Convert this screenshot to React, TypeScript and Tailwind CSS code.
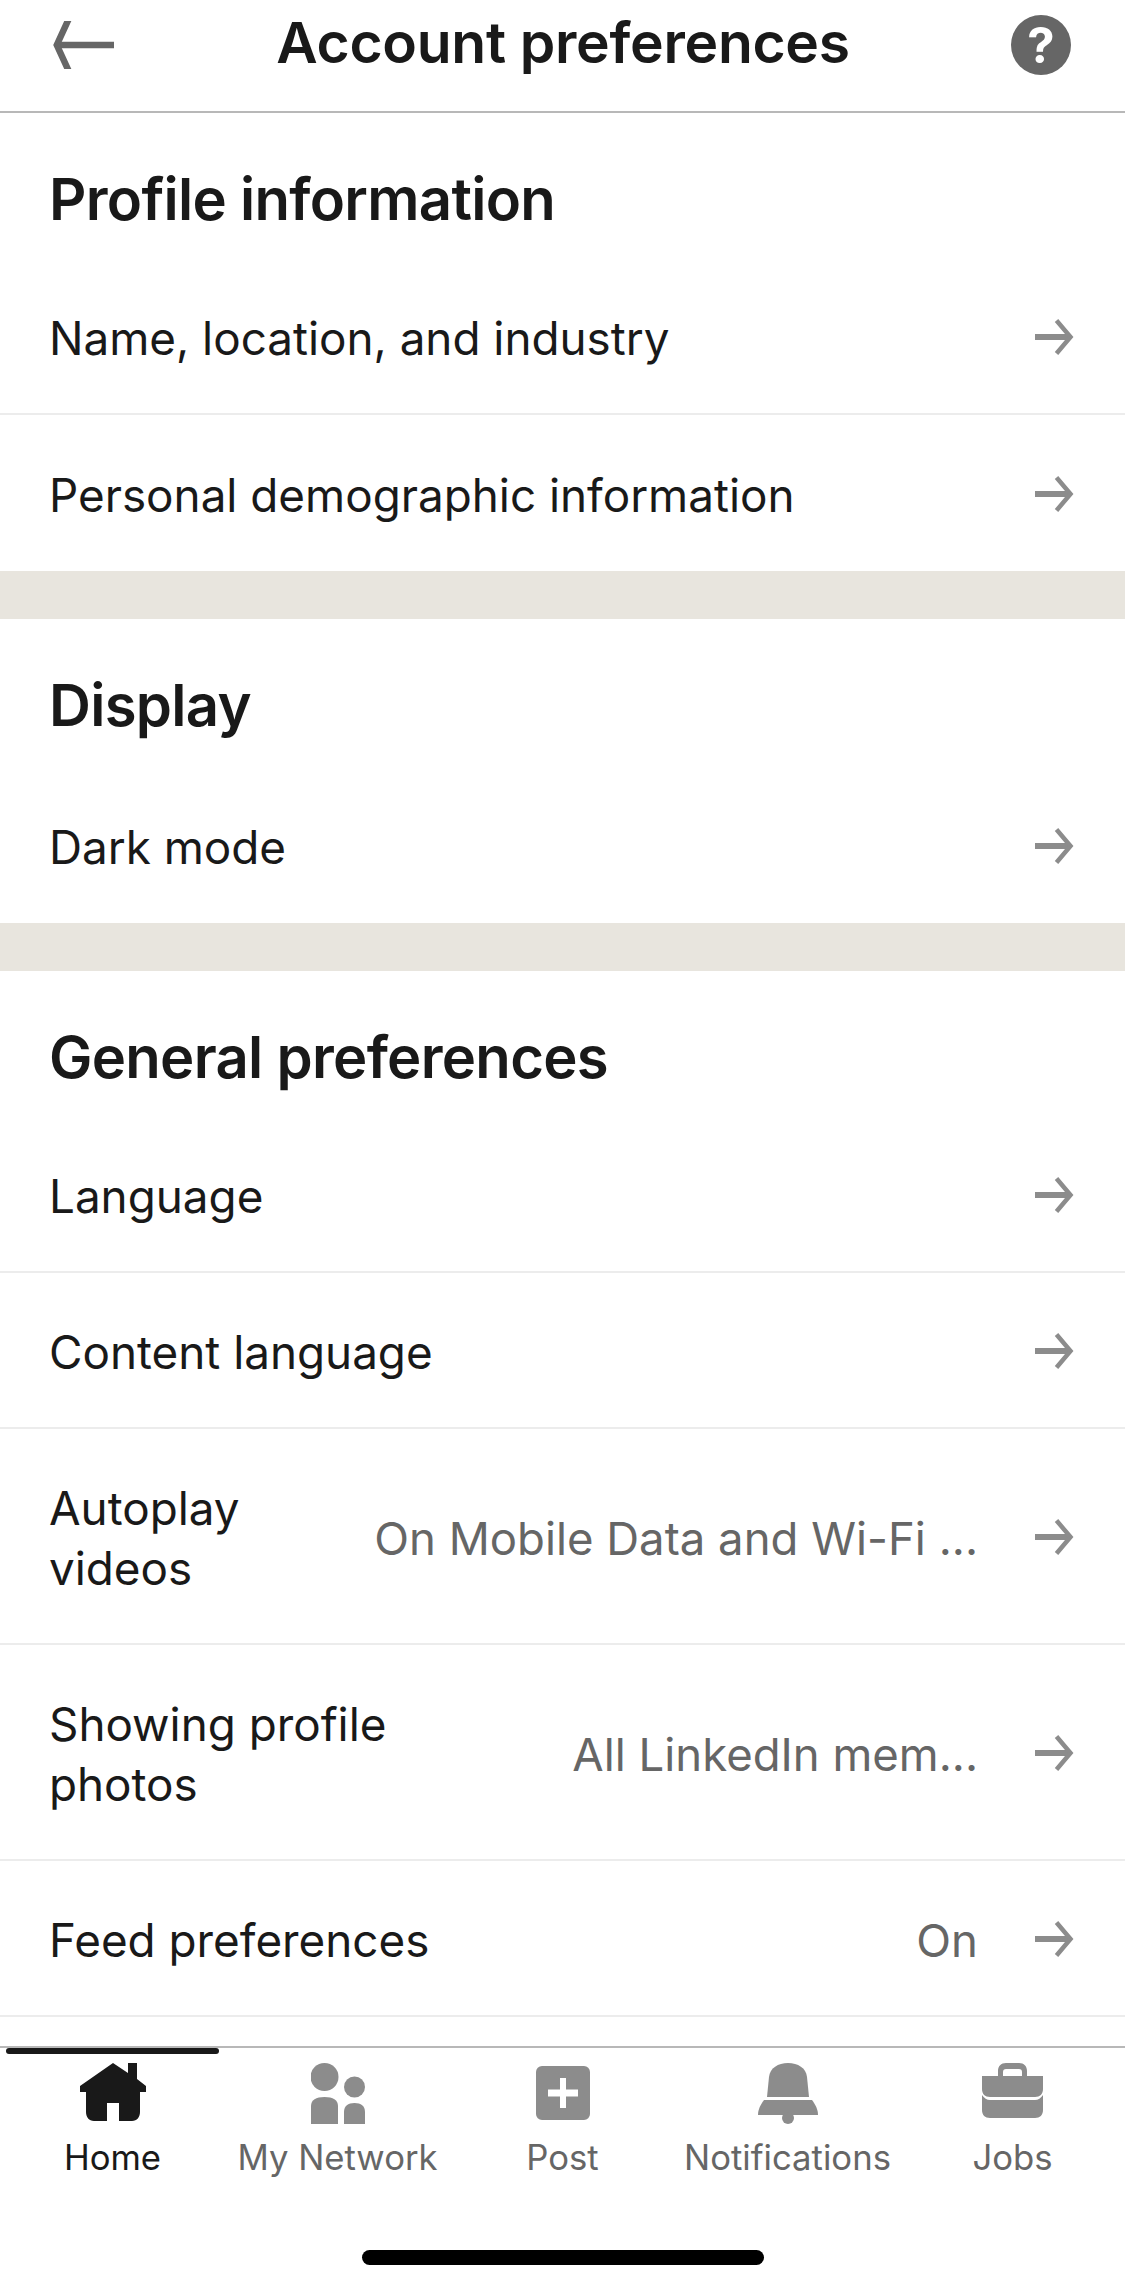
import React from "react";

function RowArrow() {
  return (
    <svg width="39" height="36" viewBox="0 0 39 36" fill="none" stroke="#8c8c8c" strokeWidth="6" className="shrink-0">
      <path d="M0 18H35" />
      <path d="M21.5 1.5L35.5 18L21.5 34.5" strokeWidth="4.5" />
    </svg>
  );
}

function Row({ label, value, last, tall }: { label: React.ReactNode; value?: string; last?: boolean; tall?: boolean }) {
  return (
    <div className={`flex items-center pl-[49px] pr-[51px] pt-[2px] ${tall ? "h-[216px]" : "h-[156px]"} ${last ? "" : "border-b-2 border-[#ececec]"}`}>
      <div className="pt-[3px] text-[45.8px] leading-[60px] text-[#191919]">{label}</div>
      {value ? <div className="pt-[3px] ml-auto mr-[57px] text-[45.5px] leading-[60px] text-[#666666] whitespace-nowrap">{value}</div> : <div className="ml-auto" />}
      <RowArrow />
    </div>
  );
}

function SectionTitle({ children, tall }: { children: React.ReactNode; tall?: boolean }) {
  return (
    <div className={`flex items-center pl-[49px] ${tall ? "h-[148px] pt-[25px]" : "h-[146px] pt-[27px]"} text-[58px] font-semibold text-[#191919] tracking-[-0.7px]`}>
      {children}
    </div>
  );
}

function Band() {
  return <div className="h-[48px] bg-[#e8e5de]" />;
}

function HomeIcon() {
  return (
    <svg width="66" height="58" viewBox="0 0 66 58" fill="#191919">
      <path d="M33 0L48 10V0H57V16L66 23V29H60V49C60 54 57 58 52 58H39V40H27V58H14C9 58 6 54 6 49V29H0V23Z" />
    </svg>
  );
}

function NetworkIcon() {
  return (
    <svg width="54" height="61" viewBox="0 0 54 61" fill="#8c8c8c">
      <circle cx="13.5" cy="14" r="14" />
      <circle cx="43.5" cy="24" r="10.5" />
      <path d="M0 61V43C0 37 5 34 13.5 34S27 37 27 43V61Z" />
      <path d="M33 61V49C33 43 37 40 43.5 40S54 43 54 49V61Z" />
    </svg>
  );
}

function PostIcon() {
  return (
    <svg width="54" height="54" viewBox="0 0 54 54" fill="#8c8c8c" className="mt-[3px] mb-[4px]">
      <path fillRule="evenodd" d="M6 0H48A6 6 0 0 1 54 6V48A6 6 0 0 1 48 54H6A6 6 0 0 1 0 48V6A6 6 0 0 1 6 0ZM24 12V23.5H12V30.5H24V42H30V30.5H42V23.5H30V12Z" />
    </svg>
  );
}

function BellIcon() {
  return (
    <svg width="60" height="61" viewBox="0 0 60 61" fill="#8c8c8c">
      <path d="M9 34L11 14C12 5 20 0 30 0S48 5 49 14L51 34Z" />
      <path d="M6 37H54C57 41 60 46 60 52H0C0 46 3 41 6 37Z" />
      <circle cx="30" cy="55" r="6" />
    </svg>
  );
}

function JobsIcon() {
  return (
    <svg width="61" height="61" viewBox="0 0 61 61" fill="#8c8c8c">
      <path fillRule="evenodd" d="M16 13V8C16 3 19 0 24 0H37C42 0 45 3 45 8V13H61V26C61 31 58 34 53 34H8C3 34 0 31 0 26V13ZM21 13H40V9C40 7 39 6 37 6H24C22 6 21 7 21 9Z" />
      <path d="M0 32C2 35 5 37 8 37H53C56 37 59 35 61 32V47C61 52 58 55 53 55H8C3 55 0 52 0 47Z" />
    </svg>
  );
}

function Tab({ icon, label, active }: { icon: React.ReactNode; label: string; active?: boolean }) {
  return (
    <div className="flex flex-col items-center flex-1">
      <div className="h-[61px] flex items-start justify-center">{icon}</div>
      <div className={`mt-[13px] text-[34.7px] leading-[40px] whitespace-nowrap ${active ? "text-[#191919]" : "text-[#666666]"}`}>{label}</div>
    </div>
  );
}

export default function App() {
  return (
    <div className="w-[1125px] h-[2284px] bg-white overflow-hidden flex flex-col font-['Inter',sans-serif]">
      <header className="h-[113px] shrink-0 border-b-2 border-[#b8b8b8] flex items-center justify-between pl-[49px] pr-[54px] pb-[21px]">
        <svg width="66" height="48" viewBox="0 0 66 48" fill="none" stroke="#666666">
          <path d="M8 24H65" strokeWidth="6.5" />
          <path d="M19.7 -2L7.8 24L19.7 50" strokeWidth="6.5" />
        </svg>
        <div className="mb-[4px] text-[57px] font-semibold text-[#191919] tracking-[-0.3px]">Account preferences</div>
        <svg width="60" height="60" viewBox="0 0 60 60">
          <circle cx="30" cy="30" r="30" fill="#666666" />
          <text x="30" y="48" textAnchor="middle" fontSize="49" fontWeight="700" fill="#ffffff" fontFamily="Inter, sans-serif">?</text>
        </svg>
      </header>

      <main className="h-[1933px] shrink-0 overflow-hidden">
        <SectionTitle>Profile information</SectionTitle>
        <Row label="Name, location, and industry" />
        <Row label="Personal demographic information" last />
        <Band />
        <SectionTitle tall>Display</SectionTitle>
        <Row label="Dark mode" last />
        <Band />
        <SectionTitle>General preferences</SectionTitle>
        <Row label="Language" />
        <Row label="Content language" />
        <Row tall label={<>Autoplay<br />videos</>} value="On Mobile Data and Wi-Fi ..." />
        <Row tall label={<>Showing profile<br />photos</>} value="All LinkedIn mem..." />
        <Row label="Feed preferences" value="On" />
      </main>

      <nav className="relative h-[238px] shrink-0 border-t-2 border-[#b8b8b8] flex flex-col">
        <div className="absolute left-[6px] top-0 w-[213px] h-[6px] rounded-full bg-[#191919]" />
        <div className="flex pt-[15px]">
          <Tab active icon={<HomeIcon />} label="Home" />
          <Tab icon={<NetworkIcon />} label="My Network" />
          <Tab icon={<PostIcon />} label="Post" />
          <Tab icon={<BellIcon />} label="Notifications" />
          <Tab icon={<JobsIcon />} label="Jobs" />
        </div>
        <div className="mx-auto mt-[73px] w-[402px] h-[15px] rounded-full bg-black" />
      </nav>
    </div>
  );
}
